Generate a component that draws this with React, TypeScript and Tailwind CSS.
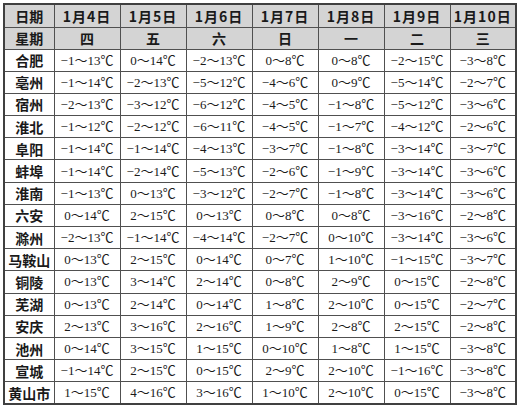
const dates = ['1月4日', '1月5日', '1月6日', '1月7日', '1月8日', '1月9日', '1月10日'];
const weekdays = ['四', '五', '六', '日', '一', '二', '三'];

// 城市 + 每天的 最低~最高 气温
const rows: [string, string[]][] = [
  ['合肥', ['-1~13', '0~14', '-2~13', '0~8', '0~8', '-2~15', '-3~8']],
  ['亳州', ['-1~14', '-2~13', '-5~12', '-4~6', '0~9', '-5~14', '-2~7']],
  ['宿州', ['-2~13', '-3~12', '-6~12', '-4~5', '-1~8', '-5~12', '-3~6']],
  ['淮北', ['-1~12', '-2~12', '-6~11', '-4~5', '-1~7', '-4~12', '-2~6']],
  ['阜阳', ['-1~14', '-1~14', '-4~13', '-3~7', '-1~8', '-3~14', '-3~7']],
  ['蚌埠', ['-1~14', '-2~14', '-5~13', '-2~6', '-1~9', '-3~14', '-3~6']],
  ['淮南', ['-1~13', '0~13', '-3~12', '-2~7', '-1~8', '-3~14', '-3~6']],
  ['六安', ['0~14', '2~15', '0~13', '0~8', '0~8', '-3~16', '-2~8']],
  ['滁州', ['-2~13', '-1~14', '-4~14', '-2~7', '0~10', '-3~14', '-3~6']],
  ['马鞍山', ['0~13', '2~15', '0~14', '0~7', '1~10', '-1~15', '-3~7']],
  ['铜陵', ['0~13', '3~14', '2~14', '0~8', '2~9', '0~15', '-2~8']],
  ['芜湖', ['0~13', '2~14', '0~14', '1~8', '2~10', '0~15', '-2~7']],
  ['安庆', ['2~13', '3~16', '2~16', '1~9', '2~8', '2~15', '-2~8']],
  ['池州', ['0~14', '3~15', '1~15', '0~10', '1~8', '1~15', '-3~8']],
  ['宣城', ['-1~14', '2~15', '0~15', '2~9', '2~10', '-1~16', '-3~8']],
  ['黄山市', ['1~15', '4~16', '3~16', '1~10', '2~10', '0~15', '-3~8']],
];

const fmt = (t: string) => t.replace(/-/g, '−').replace('~', '～') + '℃';

const head = "font-['Noto_Sans_CJK_SC',sans-serif] font-bold text-[14px]";
const cell = 'border border-[#505050] text-center p-0 leading-none';

export default function App() {
  return (
    <div className="w-[520px] h-[411px] bg-white pt-[3px] pl-[3px] text-[#1a1a1a]">
      <table className="border-collapse table-fixed w-[513px] border-2 border-[#404040]">
        <colgroup>
          <col className="w-[50px]" />
          {dates.map((d) => (
            <col key={d} className="w-[66px]" />
          ))}
        </colgroup>
        <thead>
          <tr className="h-[23px] bg-[#d4d4d4]">
            <th className={`${cell} ${head}`}>日期</th>
            {dates.map((d) => (
              <th key={d} className={`${cell} ${head} tracking-[1px]`}>
                {d}
              </th>
            ))}
          </tr>
          <tr className="h-[22px] bg-[#d4d4d4]">
            <th className={`${cell} ${head}`}>星期</th>
            {weekdays.map((w) => (
              <th key={w} className={`${cell} ${head}`}>
                {w}
              </th>
            ))}
          </tr>
        </thead>
        <tbody>
          {rows.map(([city, temps]) => (
            <tr key={city} className="h-[22.2px]">
              <td className={`${cell} ${head}`}>{city}</td>
              {temps.map((t, i) => (
                <td
                  key={i}
                  className={`${cell} font-['Liberation_Serif','Noto_Sans_CJK_SC',serif] text-[13px]`}
                >
                  {fmt(t)}
                </td>
              ))}
            </tr>
          ))}
        </tbody>
      </table>
    </div>
  );
}
